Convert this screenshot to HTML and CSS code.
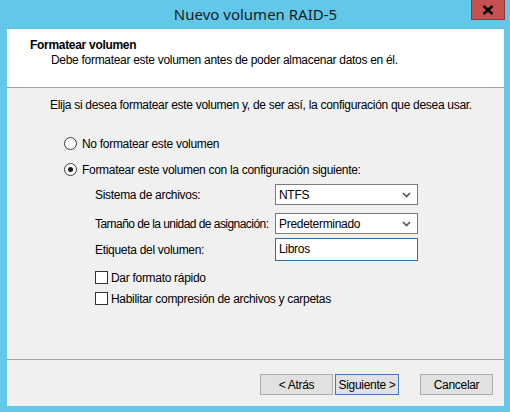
FILE: index.html
```html
<!DOCTYPE html>
<html lang="es">
<head>
<meta charset="utf-8">
<title>Nuevo volumen RAID-5</title>
<link rel="stylesheet" href="styles.css">
</head>
<body>
<div class="window">
  <div class="titlebar">
    <span class="title">Nuevo volumen RAID-5</span>
    <button class="close" aria-label="Cerrar">
      <svg width="12" height="10" viewBox="0 0 12 10"><path d="M1.5 1 L10.5 9 M10.5 1 L1.5 9" stroke="#000" stroke-width="2.4"/></svg>
    </button>
  </div>
  <div class="client">
    <div class="header">
      <div class="h-title">Formatear volumen</div>
      <div class="h-sub">Debe formatear este volumen antes de poder almacenar datos en él.</div>
    </div>
    <div class="content">
      <p class="intro">Elija si desea formatear este volumen y, de ser así, la configuración que desea usar.</p>
      <label class="radio-row"><span class="radio"></span>No formatear este volumen</label>
      <label class="radio-row second"><span class="radio checked"></span>Formatear este volumen con la configuración siguiente:</label>
      <div class="fields">
        <div class="field">
          <span class="flabel">Sistema de archivos:</span>
          <div class="select"><span>NTFS</span><svg class="chev" width="9" height="6" viewBox="0 0 9 6"><path d="M1 1 L4.5 4.5 L8 1" fill="none" stroke="#555" stroke-width="1.6"/></svg></div>
        </div>
        <div class="field">
          <span class="flabel tight">Tamaño de la unidad de asignación:</span>
          <div class="select"><span>Predeterminado</span><svg class="chev" width="9" height="6" viewBox="0 0 9 6"><path d="M1 1 L4.5 4.5 L8 1" fill="none" stroke="#555" stroke-width="1.6"/></svg></div>
        </div>
        <div class="field tb">
          <span class="flabel">Etiqueta del volumen:</span>
          <div class="textbox">Libros</div>
        </div>
        <label class="check-row first"><span class="check"></span>Dar formato rápido</label>
        <label class="check-row"><span class="check"></span>Habilitar compresión de archivos y carpetas</label>
      </div>
    </div>
    <div class="footer">
      <button class="btn">&lt; Atrás</button>
      <button class="btn default">Siguiente &gt;</button>
      <button class="btn cancel">Cancelar</button>
    </div>
  </div>
</div>
</body>
</html>
```

FILE: styles.css
```css
* { box-sizing: border-box; }
html, body { margin: 0; padding: 0; }
body {
  width: 510px;
  height: 412px;
  overflow: hidden;
  font-family: "Liberation Sans", Arial, sans-serif;
  font-size: 12px;
  letter-spacing: -0.3px;
  color: #000;
}
.window {
  width: 510px;
  height: 412px;
  background: #63c7e9;
  padding: 0 6px 6px 7px;
  display: flex;
  flex-direction: column;
}
.titlebar {
  height: 29px;
  position: relative;
  display: flex;
  justify-content: center;
  align-items: center;
  padding-bottom: 1px;
}
.title {
  font-family: "Noto Sans", "Liberation Sans", sans-serif;
  font-size: 15px;
  letter-spacing: 0;
  color: #1c1c1c;
}
.close {
  position: absolute;
  top: 0;
  right: -1px;
  width: 34px;
  height: 20px;
  background: #c75050;
  border: 1px solid #8f3a3a;
  border-top: none;
  padding: 0;
  display: flex;
  align-items: center;
  justify-content: center;
}
.client {
  flex: 1;
  background: #f0f0f0;
  display: flex;
  flex-direction: column;
}
.header {
  height: 59px;
  background: #fff;
  border-bottom: 1px solid #a0a0a0;
  padding: 9px 0 0 23px;
}
.h-title { font-weight: bold; line-height: 15px; }
.h-sub { line-height: 15px; padding-left: 21px; }
.content {
  flex: 1;
  padding: 10px 0 0 43px;
}
.intro { margin: 0; line-height: 15px; }
.radio-row {
  display: flex;
  align-items: center;
  gap: 5px;
  margin: 23px 0 0 14px;
  height: 15px;
}
.radio-row.second { margin-top: 11px; }
.radio {
  width: 13px;
  height: 13px;
  border: 1px solid #3c3c3c;
  border-radius: 50%;
  background: #fff;
  position: relative;
  display: inline-block;
}
.radio.checked::after {
  content: "";
  position: absolute;
  left: 3px; top: 3px;
  width: 5px; height: 5px;
  border-radius: 50%;
  background: #1a1a1a;
}
.fields {
  padding-left: 45px;
  padding-top: 7px;
}
.field {
  display: flex;
  align-items: center;
  height: 21px;
  margin-top: 8px;
}
.field:first-child { margin-top: 0; }
.field.tb { height: 23px; margin-top: 4px; }
.flabel { width: 180px; flex-shrink: 0; white-space: nowrap; }
.flabel.tight { letter-spacing: -0.55px; }
.select {
  width: 143px;
  height: 21px;
  flex-shrink: 0;
  border: 1px solid #7a7a7a;
  background: #fff;
  display: flex;
  align-items: center;
  justify-content: space-between;
  padding: 0 6px 0 3px;
}
.textbox {
  width: 143px;
  height: 23px;
  flex-shrink: 0;
  border: 1px solid #2b6ea6;
  background: #fff;
  padding: 3px 3px;
}
.check-row {
  display: flex;
  align-items: center;
  gap: 3px;
  height: 15px;
  margin-top: 9px;
}
.check-row.first { margin-top: 9px; }
.check-row + .check-row { margin-top: 6px; }
.check {
  width: 13px;
  height: 13px;
  border: 1px solid #333;
  background: #fff;
  display: inline-block;
}
.footer {
  height: 47px;
  border-top: 1px solid #a0a0a0;
  display: flex;
  align-items: flex-start;
  padding: 14px 0 0 253px;
}
.btn {
  font-family: "Liberation Sans", Arial, sans-serif;
  font-size: 12px;
  letter-spacing: -0.3px;
  height: 21px;
  width: 73px;
  background: #e1e1e1;
  border: 1px solid #adadad;
  padding: 0;
  color: #000;
}
.btn.default {
  width: 64px;
  margin-left: 2px;
  border-color: #3a79b8;
}
.btn.cancel { margin-left: 21px; }
```
